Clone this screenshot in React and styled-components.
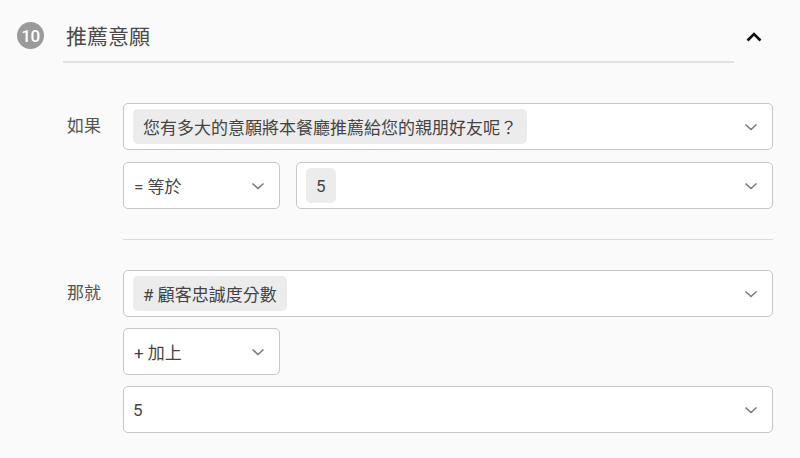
import React from 'react';
import styled, { createGlobalStyle } from 'styled-components';

const GlobalStyle = createGlobalStyle`
    body {
        margin: 0;
        background: #fafafa;
        font-family: Roboto, "Noto Sans CJK TC", sans-serif;
        color: #444;
    }
`;

const Page = styled.div`
    width: 800px;
    height: 458px;
    overflow: hidden;
`;

const Header = styled.div`
    display: flex;
    align-items: flex-start;
`;

const BadgeCol = styled.div`
    width: 63px;
    padding: 22px 0 0 17px;
    box-sizing: border-box;
`;

const Badge = styled.div`
    width: 27px;
    height: 27px;
    border-radius: 50%;
    background: #9a9a9a;
    color: #fff;
    font-size: 17px;
    font-weight: 500;
    display: flex;
    align-items: center;
    justify-content: center;
    letter-spacing: -0.5px;
`;

const TitleBar = styled.div`
    width: 671px;
    height: 53px;
    padding-top: 8px;
    border-bottom: 2px solid #e2e2e2;
    display: flex;
    align-items: center;
`;

const Title = styled.h2`
    margin: 0 0 0 3px;
    font-size: 21px;
    font-weight: 400;
    color: #4a4a4a;
`;

const Toggle = styled.button`
    border: none;
    background: none;
    padding: 0;
    margin: 30px 0 0 12px;
    width: 16px;
    height: 14px;
    display: flex;
    align-items: center;
    justify-content: center;
`;

const Body = styled.div`
    padding: 40px 0 0 67px;
`;

const Rule = styled.div`
    display: flex;
`;

const Label = styled.div`
    width: 56px;
    line-height: 47px;
    font-size: 17px;
    color: #555;
`;

const Fields = styled.div`
    width: 650px;
    display: flex;
    flex-direction: column;
    gap: ${p => p.gap}px;
`;

const Row = styled.div`
    display: flex;
    gap: 16px;
`;

const Select = styled.div`
    box-sizing: border-box;
    width: ${p => (p.w ? `${p.w}px` : '100%')};
    flex: ${p => (p.grow ? '1 1 0' : 'none')};
    height: 47px;
    background: #fff;
    border: 1px solid #c6c6c6;
    border-radius: 5px;
    display: flex;
    align-items: center;
    padding: 0 14px 0 9px;
    font-size: 17px;
    color: #444;
`;

const Value = styled.span`
    flex: 1;
    padding-left: ${p => (p.plain ? 0 : 1)}px;
`;

const Chip = styled.span`
    background: #ececec;
    border-radius: 5px;
    height: 35px;
    display: inline-flex;
    align-items: center;
    padding: 0 10px;
    white-space: nowrap;
`;

const Spacer = styled.span`
    flex: 1;
`;

const Divider = styled.div`
    margin: 30px 0 30px 56px;
    width: 650px;
    border-top: 1px solid #dcdcdc;
`;

const ChevronDown = () => (
    <svg width="14" height="8" viewBox="0 0 14 8">
        <path d="M1.5 1.5 L7 6.5 L12.5 1.5" fill="none" stroke="#7a7a7a" strokeWidth="1.6" />
    </svg>
);

const ChevronUp = () => (
    <svg width="16" height="10" viewBox="0 0 16 10">
        <path d="M1.5 8.5 L8 2 L14.5 8.5" fill="none" stroke="#111" strokeWidth="2.6" />
    </svg>
);

const App = () => {
    return (
        <Page>
            <GlobalStyle />
            <Header>
                <BadgeCol>
                    <Badge>10</Badge>
                </BadgeCol>
                <TitleBar>
                    <Title>推薦意願</Title>
                </TitleBar>
                <Toggle>
                    <ChevronUp />
                </Toggle>
            </Header>
            <Body>
                <Rule>
                    <Label>如果</Label>
                    <Fields gap={12}>
                        <Select>
                            <Chip>您有多大的意願將本餐廳推薦給您的親朋好友呢？</Chip>
                            <Spacer />
                            <ChevronDown />
                        </Select>
                        <Row>
                            <Select w={157}>
                                <Value>= 等於</Value>
                                <ChevronDown />
                            </Select>
                            <Select grow>
                                <Chip>5</Chip>
                                <Spacer />
                                <ChevronDown />
                            </Select>
                        </Row>
                    </Fields>
                </Rule>
                <Divider />
                <Rule>
                    <Label>那就</Label>
                    <Fields gap={11}>
                        <Select>
                            <Chip># 顧客忠誠度分數</Chip>
                            <Spacer />
                            <ChevronDown />
                        </Select>
                        <Select w={157}>
                            <Value>+ 加上</Value>
                            <ChevronDown />
                        </Select>
                        <Select>
                            <Value plain>5</Value>
                            <ChevronDown />
                        </Select>
                    </Fields>
                </Rule>
            </Body>
        </Page>
    );
};

export default App;
